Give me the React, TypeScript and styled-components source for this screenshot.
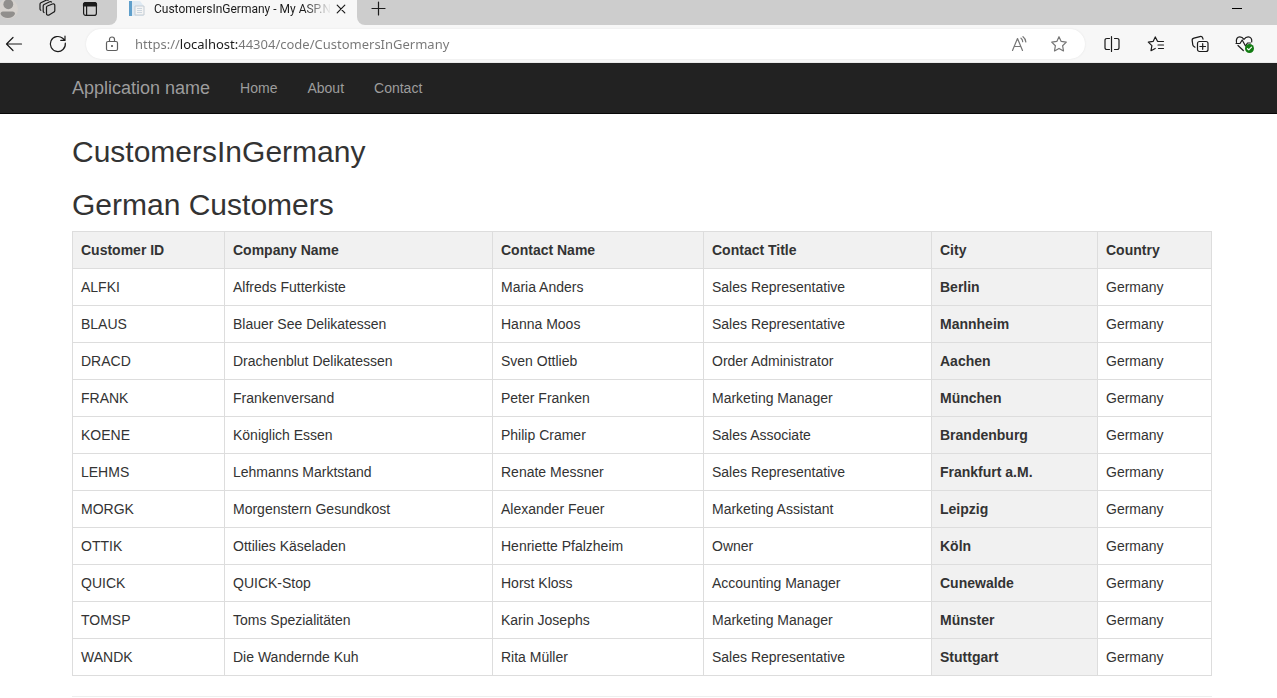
import React from "react";
import styled, { createGlobalStyle } from "styled-components";

const GlobalStyle = createGlobalStyle`
  *, *::before, *::after { box-sizing: border-box; }
  body {
    margin: 0;
    background: #fff;
    color: #333;
    font: 14px/20px "Liberation Sans", Arial, sans-serif;
  }
  html { overflow: hidden; }
`;

/* ---------- Browser window ---------- */

const Browser = styled.header`
  background: #f7f7f7;
  border-bottom: 1px solid #eaeaea;
`;

const TabStrip = styled.div`
  display: flex;
  height: 25px;
  overflow: hidden;
`;

const StripStart = styled.div`
  display: flex;
  flex: none;
  align-items: flex-start;
  width: 117px;
  background: #cdcdcd;
  border-bottom-right-radius: 8px;
`;

const StripEnd = styled.div`
  display: flex;
  flex: 1;
  justify-content: space-between;
  padding: 0 30px 0 11px;
  background: #cdcdcd;
  border-bottom-left-radius: 8px;
`;

const Tab = styled.div`
  display: flex;
  flex: none;
  width: 240px;
  height: 17px;
  padding: 0 6px 0 12px;
  align-items: center;
  svg { flex: none; }
`;

const TabTitle = styled.span`
  margin: 0 auto 0 9px;
  white-space: nowrap;
  color: #1b1b1b;
  font: 12px/16px Roboto, "Open Sans", sans-serif;
  mask-image: linear-gradient(to right, #000 85%, transparent);
`;

const IconButton = styled.button<{ $width?: number; $height?: number; $color?: string }>`
  display: flex;
  flex: none;
  align-items: center;
  justify-content: center;
  width: ${(p) => p.$width ?? 44}px;
  height: ${(p) => p.$height ?? 30}px;
  padding: 0;
  border: 0;
  background: none;
  color: ${(p) => p.$color ?? "#1b1b1b"};
  svg { flex: none; display: block; }
`;

const Toolbar = styled.div`
  display: flex;
  align-items: center;
  height: 37px;
  padding-right: 11px;
`;

const ToolbarStart = styled.div`
  display: flex;
  flex: none;
  width: 86px;
`;

const AddressBar = styled.form`
  display: flex;
  flex: 1;
  align-items: center;
  height: 30px;
  margin-right: 5px;
  padding: 0 7px 0 4px;
  border-radius: 15px;
  background: #fff;
  box-shadow: 0 0 2px #e2e2e2;
`;

const AddressInput = styled.input`
  flex: 1;
  min-width: 0;
  height: 30px;
  padding: 0 0 0 1px;
  border: 0;
  outline: 0;
  color: #767676;
  font: 13px/20px "Noto Sans", "Open Sans", sans-serif;
  background: linear-gradient(to right, #767676 46px, #1b1b1b 46px, #1b1b1b 104px, #767676 104px);
  background-clip: text;
  -webkit-background-clip: text;
  -webkit-text-fill-color: transparent;
`;

/* ---------- Web page ---------- */

const Page = styled.div`
  > nav, > main { padding-left: 7px; }
`;

const Container = styled.div`
  max-width: 1140px;
  margin: 0 auto;
`;

const Navbar = styled.nav`
  background: #222;
  border-bottom: 1px solid #080808;
`;

const NavRow = styled(Container)`
  display: flex;
  align-items: center;
  height: 50px;
`;

const Brand = styled.a`
  margin-right: 15px;
  color: #9d9d9d;
  font-size: 18px;
  text-decoration: none;
`;

const NavLink = styled.a`
  padding: 15px;
  color: #9d9d9d;
  text-decoration: none;
`;

const Main = styled.main`
  padding-top: 1px;
`;

const Heading = styled.h2`
  margin: 20px 0 10px;
  font-size: 30px;
  line-height: 33px;
  font-weight: 400;
`;

const Table = styled.table`
  width: 100%;
  margin-bottom: 20px;
  border-collapse: collapse;
  table-layout: fixed;
`;

const Col = styled.col<{ $width?: number }>`
  width: ${(p) => (p.$width ? `${p.$width}px` : "auto")};
`;

const Cell = styled.td`
  padding: 8px;
  border: 1px solid #ddd;
  text-align: left;
`;

const HeadCell = styled(Cell)`
  background: #f1f1f1;
  font-weight: 700;
`;

const Rule = styled.hr`
  margin: 20px 0;
  border: 0;
  border-top: 1px solid #eee;
`;

/* ---------- Icons ---------- */

const Svg = ({ w = 20, h = 20, children }: { w?: number; h?: number; children: React.ReactNode }) => (
  <svg width={w} height={h} viewBox={`0 0 ${w} ${h}`} fill="none" stroke="currentColor" strokeWidth="1.2" strokeLinecap="round" strokeLinejoin="round" aria-hidden="true">
    {children}
  </svg>
);

const AvatarIcon = () => (
  <svg width="20" height="20" viewBox="0 0 20 20" aria-hidden="true">
    <circle cx="10" cy="10" r="10" fill="#d6d2ce" />
    <circle cx="10.300" cy="5.300" r="4.900" fill="#918f8d" />
    <path d="M2.500 15c0-1.600.9-2.500 2.500-2.500h9.500c1.600 0 2.500.9 2.500 2.500-1.200 2.600-4 4-7.200 4s-6-1.400-7.300-4z" fill="#918f8d" />
  </svg>
);
const WorkspacesIcon = () => (
  <Svg>
    <path d="M9.500 9.200c0-.6.300-1 .9-1.200l5-2c1.200-.5 2.400.2 2.400 1.400v5.200c0 .6-.3 1.200-.9 1.500l-4.800 2.800c-1.200.7-2.600.1-2.600-1.200z" />
    <path d="M7 14.500c-.6-.3-.8-.8-.8-1.400V8c0-.6.300-1.200.9-1.500l5.600-2.700c.6-.3 1.300-.2 1.800.2M3.800 12.300c-.5-.3-.8-.8-.8-1.400V6.300c0-.6.300-1.200.9-1.500l5.300-2.600c.6-.3 1.300-.2 1.800.2" />
  </Svg>
);
const TabActionsIcon = () => (
  <Svg w={16} h={16}>
    <rect x="1.600" y="1.600" width="12.800" height="12.800" rx="2.200" />
    <path d="M1.500 3.500c0-1.200.8-2 2-2h9c1.200 0 2 .8 2 2V5h-13z" fill="currentColor" />
    <path d="M4.600 5v9" />
  </Svg>
);
const PageIcon = () => (
  <svg width="16" height="16" viewBox="0 0 16 16" aria-hidden="true">
    <path d="M0 0h3v15H0z" fill="#5f9fcb" />
    <path d="M3 0h8l3 4v11H3z" fill="#dfeaf3" />
    <path d="M6 5h9v9H6z" fill="#f4f4f4" stroke="#c3ccd4" />
    <path d="M8 7.500h5M8 9.500h5M8 11.500h5" stroke="#ccd6df" />
  </svg>
);
const CloseIcon = () => <Svg w={10} h={10}><path d="M1.200 1.200l7.600 7.600M8.800 1.200L1.200 8.800" /></Svg>;
const PlusIcon = () => <Svg w={15} h={15}><path d="M7.500 1v13M1 7.500h13" /></Svg>;
const MinimizeIcon = () => <Svg w={10} h={10}><path d="M0 5.500h10" stroke="#000" strokeWidth="1" strokeLinecap="butt" /></Svg>;
const BackIcon = () => <Svg><path d="M17.500 10h-15M9 3.500L2.500 10 9 16.500" /></Svg>;
const ReloadIcon = () => <Svg><path d="M17.300 9.200A7.500 7.500 0 1 1 14.700 4.300L16.800 6.200M17 2.200v4.200h-4.200" /></Svg>;
const LockIcon = () => (
  <Svg w={14} h={16}>
    <rect x="1.500" y="5.500" width="11" height="9" rx="1.500" />
    <path d="M4.500 5.500V3.300C4.500 2 5.500 1 7 1s2.500 1 2.500 2.300v2.200" />
    <circle cx="7" cy="10" r=".5" fill="currentColor" />
  </Svg>
);
const ReadAloudIcon = () => (
  <Svg w={18} h={18}>
    <path d="M1.500 15.500L6.500 3.500l5 12M3.200 11.500h6.600M10 3.200c1 .8 1.700 2 1.700 3.500M12 1.700c1.600 1.200 2.700 3 2.800 5.200" />
  </Svg>
);
const StarIcon = () => (
  <Svg w={18} h={18}>
    <path d="M9 1.700l2.200 4.700 5.100.7-3.700 3.600.9 5.200L9 13.400l-4.500 2.500.9-5.200L1.700 7.100l5.100-.7z" />
  </Svg>
);
const SplitIcon = () => (
  <Svg w={18} h={18}>
    <path d="M6.500 3.500H4c-1.200 0-2 .7-2 1.800v7.400c0 1.100.8 1.800 2 1.800h2.500M11.500 3.500H14c1.200 0 2 .7 2 1.800v7.400c0 1.100-.8 1.800-2 1.800h-2.500M8.500 1.500v15" />
  </Svg>
);
const FavoritesIcon = () => (
  <Svg w={18} h={18}>
    <path d="M11 6.300h-.5L8.300 1.900 6.100 6.400l-4.800.7 3.600 3.500-.9 5.100 4.200-2.200M11.500 6.500h5M11 10h5.500M11.500 13.500h5" />
  </Svg>
);
const CollectionsIcon = () => (
  <Svg w={18} h={18}>
    <rect x="6.500" y="6.500" width="10.500" height="10" rx="2" />
    <path d="M11.700 8.700v5.600M8.900 11.500h5.600M4 12.200l-1-.7c-.7-.4-1-.9-1.200-1.700L1.200 5.700c-.2-1.200.5-2.200 1.700-2.500l6-1.600c1.200-.3 2.400.2 2.800 1.400l.3 1.200" />
  </Svg>
);
const EssentialsIcon = () => (
  <Svg w={20} h={20}>
    <path d="M2.500 8.500C1.800 5 3.300 2.800 5.800 2.800c2 0 3.300 1.200 4.200 2.500.9-1.300 2.200-2.500 4.200-2.500 2.500 0 4 2.200 3.500 5M4 11.500l5.300 5M2 9.500h4L8.200 6l3.300 6 2-3h3" />
    <circle cx="15.500" cy="14.500" r="4.500" fill="#137c13" stroke="none" />
    <path d="M13.500 14.700l1.300 1.200 2.700-2.800" stroke="#fff" />
  </Svg>
);

/* ---------- Data ---------- */

const columns = ["Customer ID", "Company Name", "Contact Name", "Contact Title", "City", "Country"];

const customers = [
  ["ALFKI", "Alfreds Futterkiste", "Maria Anders", "Sales Representative", "Berlin"],
  ["BLAUS", "Blauer See Delikatessen", "Hanna Moos", "Sales Representative", "Mannheim"],
  ["DRACD", "Drachenblut Delikatessen", "Sven Ottlieb", "Order Administrator", "Aachen"],
  ["FRANK", "Frankenversand", "Peter Franken", "Marketing Manager", "München"],
  ["KOENE", "Königlich Essen", "Philip Cramer", "Sales Associate", "Brandenburg"],
  ["LEHMS", "Lehmanns Marktstand", "Renate Messner", "Sales Representative", "Frankfurt a.M."],
  ["MORGK", "Morgenstern Gesundkost", "Alexander Feuer", "Marketing Assistant", "Leipzig"],
  ["OTTIK", "Ottilies Käseladen", "Henriette Pfalzheim", "Owner", "Köln"],
  ["QUICK", "QUICK-Stop", "Horst Kloss", "Accounting Manager", "Cunewalde"],
  ["TOMSP", "Toms Spezialitäten", "Karin Josephs", "Marketing Manager", "Münster"],
  ["WANDK", "Die Wandernde Kuh", "Rita Müller", "Sales Representative", "Stuttgart"],
];

export default function App() {
  return (
    <>
      <GlobalStyle />
      <Browser>
        <TabStrip>
          <StripStart>
            <IconButton $width={16} $height={18} aria-label="Profile"><AvatarIcon /></IconButton>
            <IconButton $width={62} $height={16} aria-label="Workspaces"><WorkspacesIcon /></IconButton>
            <IconButton $width={24} $height={17} aria-label="Tab actions"><TabActionsIcon /></IconButton>
          </StripStart>
          <Tab>
            <PageIcon />
            <TabTitle>CustomersInGermany - My ASP.N</TabTitle>
            <IconButton $width={20} $height={17} aria-label="Close tab"><CloseIcon /></IconButton>
          </Tab>
          <StripEnd>
            <IconButton $width={20} $height={16} aria-label="New tab"><PlusIcon /></IconButton>
            <IconButton $width={20} $height={16} aria-label="Minimize"><MinimizeIcon /></IconButton>
          </StripEnd>
        </TabStrip>
        <Toolbar>
          <ToolbarStart>
            <IconButton $width={28} aria-label="Back"><BackIcon /></IconButton>
            <IconButton $width={60} aria-label="Refresh"><ReloadIcon /></IconButton>
          </ToolbarStart>
          <AddressBar>
            <IconButton type="button" $color="#5f5f5f" aria-label="Site information"><LockIcon /></IconButton>
            <AddressInput aria-label="Address" defaultValue="https://localhost:44304/code/CustomersInGermany" />
            <IconButton type="button" $width={40} $color="#767676" aria-label="Read aloud"><ReadAloudIcon /></IconButton>
            <IconButton type="button" $width={38} $color="#767676" aria-label="Add to favorites"><StarIcon /></IconButton>
          </AddressBar>
          <IconButton aria-label="Split screen"><SplitIcon /></IconButton>
          <IconButton aria-label="Favorites"><FavoritesIcon /></IconButton>
          <IconButton aria-label="Collections"><CollectionsIcon /></IconButton>
          <IconButton aria-label="Browser essentials"><EssentialsIcon /></IconButton>
        </Toolbar>
      </Browser>

      <Page>
        <Navbar>
          <NavRow>
            <Brand href="#">Application name</Brand>
            <NavLink href="#">Home</NavLink>
            <NavLink href="#">About</NavLink>
            <NavLink href="#">Contact</NavLink>
          </NavRow>
        </Navbar>

        <Main>
          <Container>
            <Heading>CustomersInGermany</Heading>
            <Heading>German Customers</Heading>
            <Table>
              <colgroup>
                <Col $width={152} />
                <Col $width={268} />
                <Col $width={211} />
                <Col $width={228} />
                <Col $width={166} />
                <Col />
              </colgroup>
              <thead>
                <tr>
                  {columns.map((name) => <HeadCell as="th" scope="col" key={name}>{name}</HeadCell>)}
                </tr>
              </thead>
              <tbody>
                {customers.map(([id, company, contact, title, city]) => (
                  <tr key={id}>
                    <Cell>{id}</Cell>
                    <Cell>{company}</Cell>
                    <Cell>{contact}</Cell>
                    <Cell>{title}</Cell>
                    <HeadCell>{city}</HeadCell>
                    <Cell>Germany</Cell>
                  </tr>
                ))}
              </tbody>
            </Table>
            <Rule />
          </Container>
        </Main>
      </Page>
    </>
  );
}
